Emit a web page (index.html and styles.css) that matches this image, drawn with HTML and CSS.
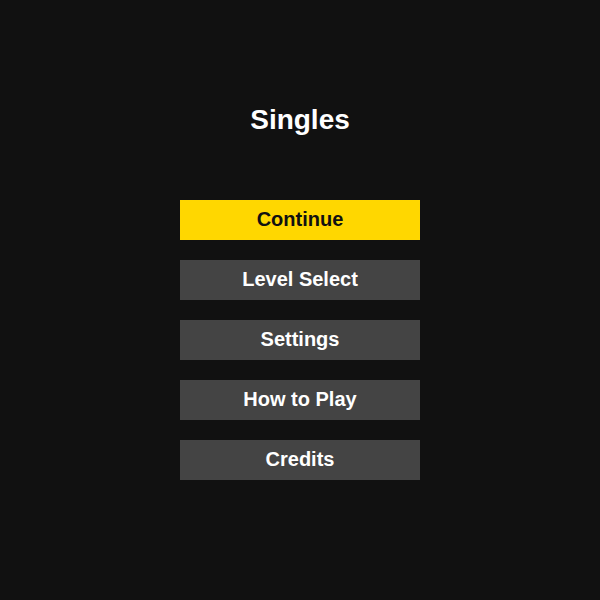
FILE: index.html
```html
<!DOCTYPE html>
<html lang="en">
<head>
  <meta charset="UTF-8">
  <title>Singles</title>
  <link rel="stylesheet" href="styles.css">
</head>
<body>
  <div class="menu">
    <h1 class="title">Singles</h1>

    <!-- Main menu -->
    <div class="menu-list">
      <button class="menu-btn active">Continue</button>
      <button class="menu-btn">Level Select</button>
      <button class="menu-btn">Settings</button>
      <button class="menu-btn">How to Play</button>
      <button class="menu-btn">Credits</button>
    </div>
  </div>
</body>
</html>
```

FILE: styles.css
```css
/* General Styles */
body {
  margin: 0;
  background-color: #111;
  color: #fff;
  font-family: 'Liberation Sans', Arial, sans-serif;
}

.menu {
  display: flex;
  flex-direction: column;
  align-items: center;
  padding-top: 104px;
}

.title {
  margin: 0 0 64px;
  font-size: 28px;
  line-height: 32px;
  font-weight: bold;
}

.menu-list {
  display: flex;
  flex-direction: column;
  gap: 20px;
}

.menu-btn {
  width: 240px;
  height: 40px;
  padding: 0 0 2px;
  border: none;
  background-color: #444;
  color: #fff;
  font-family: 'Liberation Sans', Arial, sans-serif;
  font-size: 20px;
  font-weight: bold;
  cursor: pointer;
}

.menu-btn.active {
  background-color: #ffd700;
  color: #111;
}
```
